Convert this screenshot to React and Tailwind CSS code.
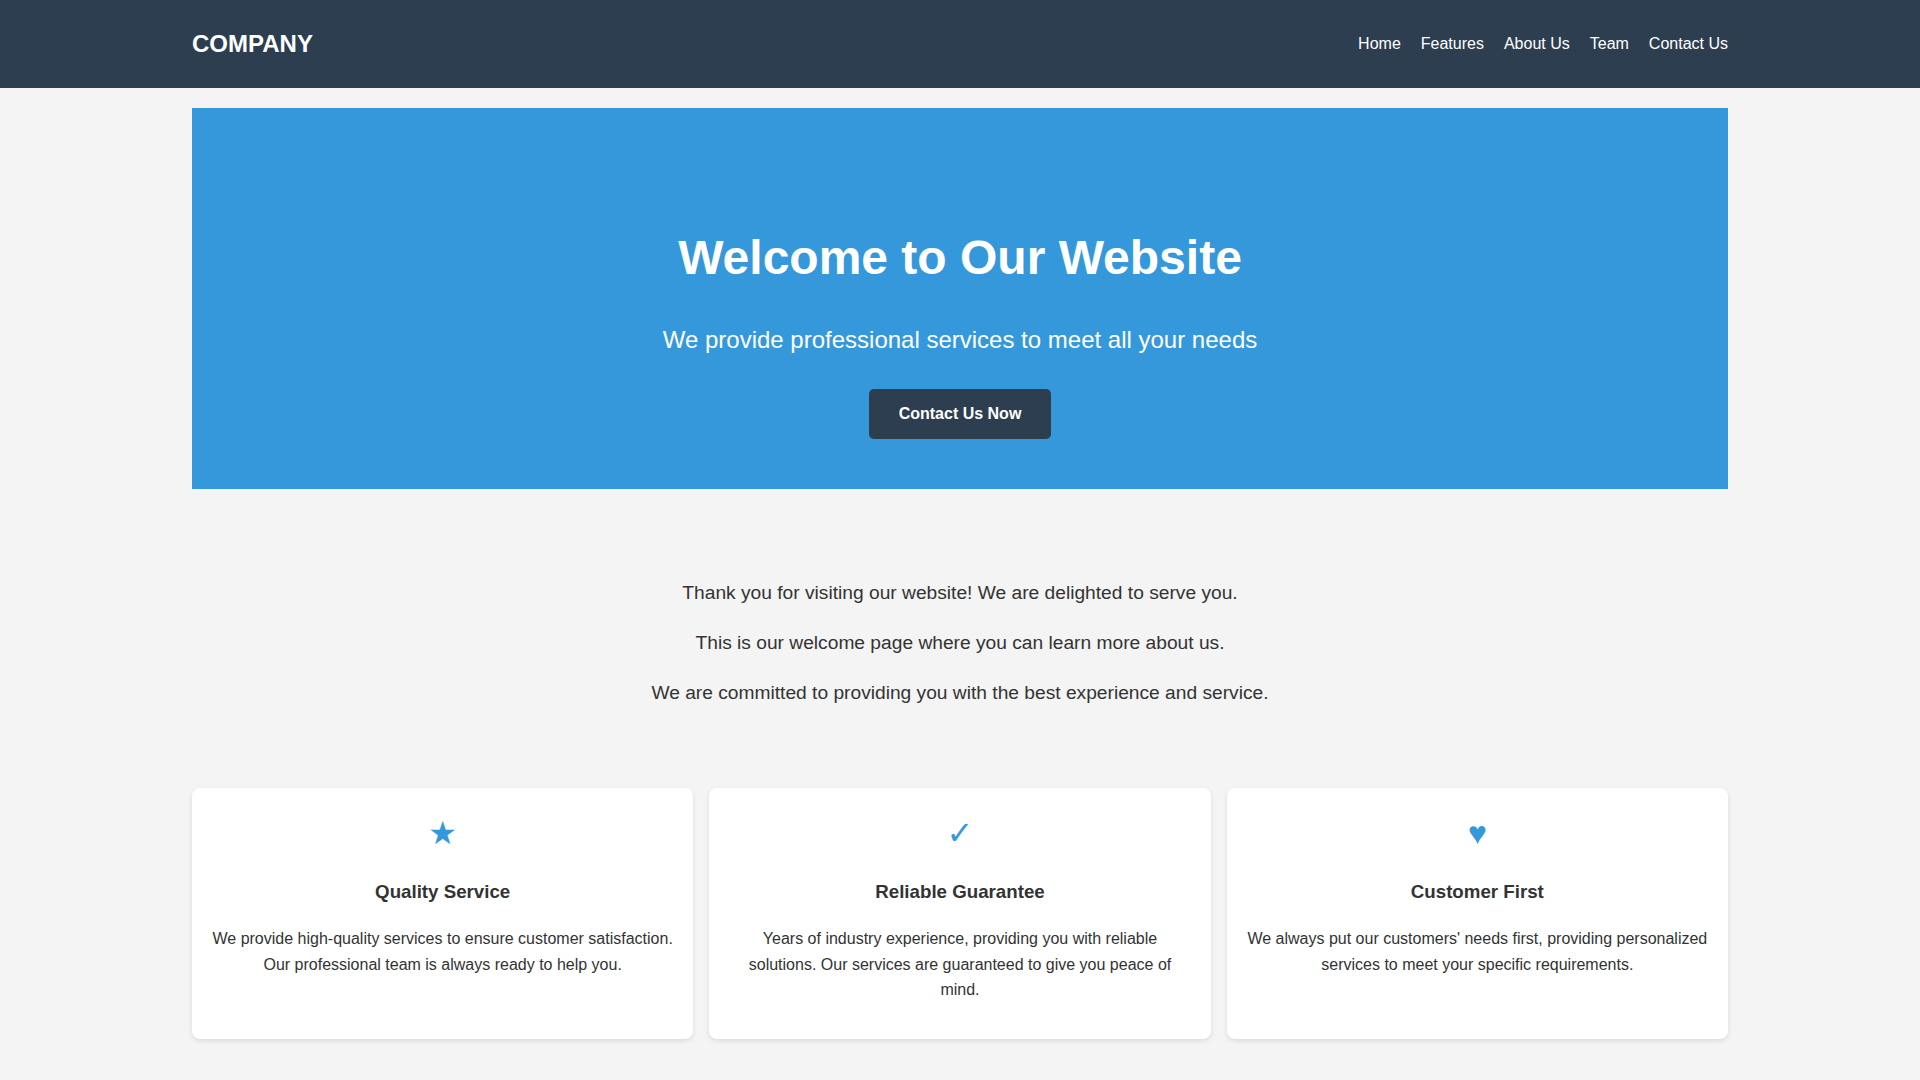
const NAV_LINKS = ['Home', 'Features', 'About Us', 'Team', 'Contact Us'];

const FEATURES = [
  {
    icon: '★',
    title: 'Quality Service',
    text: 'We provide high-quality services to ensure customer satisfaction. Our professional team is always ready to help you.',
  },
  {
    icon: '✓',
    title: 'Reliable Guarantee',
    text: 'Years of industry experience, providing you with reliable solutions. Our services are guaranteed to give you peace of mind.',
  },
  {
    icon: '♥',
    title: 'Customer First',
    text: "We always put our customers' needs first, providing personalized services to meet your specific requirements.",
  },
];

export default function App() {
  return (
    <div className="min-h-screen bg-[#f4f4f4] text-[#333] font-['Liberation_Sans',Arial,sans-serif] pb-10">
      {/* Header */}
      <header className="bg-[#2c3e50] text-white">
        <div className="w-[1536px] mx-auto h-[88px] flex items-center justify-between">
          <div className="text-2xl font-bold">COMPANY</div>
          <nav className="flex items-center gap-5 text-base">
            {NAV_LINKS.map((link) => (
              <a key={link} href="#" className="text-white hover:underline">
                {link}
              </a>
            ))}
          </nav>
        </div>
      </header>

      <main className="w-[1536px] mx-auto">
        {/* Hero */}
        <section className="mt-5 bg-[#3498db] text-white text-center flex flex-col items-center pt-[121px] pb-[50px]">
          <h1 className="text-5xl font-bold leading-[1.2]">Welcome to Our Website</h1>
          <p className="mt-[34px] text-2xl leading-[1.6]">
            We provide professional services to meet all your needs
          </p>
          <button className="mt-[30px] bg-[#2c3e50] text-white font-bold text-base leading-[1.6] px-[30px] py-3 rounded-[5px]">
            Contact Us Now
          </button>
        </section>

        {/* Intro */}
        <section className="mt-[89px] text-center text-[19.2px] leading-[30px] space-y-5">
          <p>Thank you for visiting our website! We are delighted to serve you.</p>
          <p>This is our welcome page where you can learn more about us.</p>
          <p>We are committed to providing you with the best experience and service.</p>
        </section>

        {/* Features */}
        <section className="mt-[80px] grid grid-cols-3 gap-4">
          {FEATURES.map((f) => (
            <div
              key={f.title}
              className="bg-white rounded-lg shadow-[0_2px_5px_rgba(0,0,0,0.1)] p-5 text-center"
            >
              <div className="text-[32px] leading-[1.6] text-[#3498db] font-['Liberation_Sans','DejaVu_Sans',sans-serif]">
                {f.icon}
              </div>
              <h3 className="mt-[18.72px] mb-[18.72px] text-[18.72px] font-bold leading-[1.6]">
                {f.title}
              </h3>
              <p className="mb-4 text-base leading-[1.6]">{f.text}</p>
            </div>
          ))}
        </section>
      </main>
    </div>
  );
}
